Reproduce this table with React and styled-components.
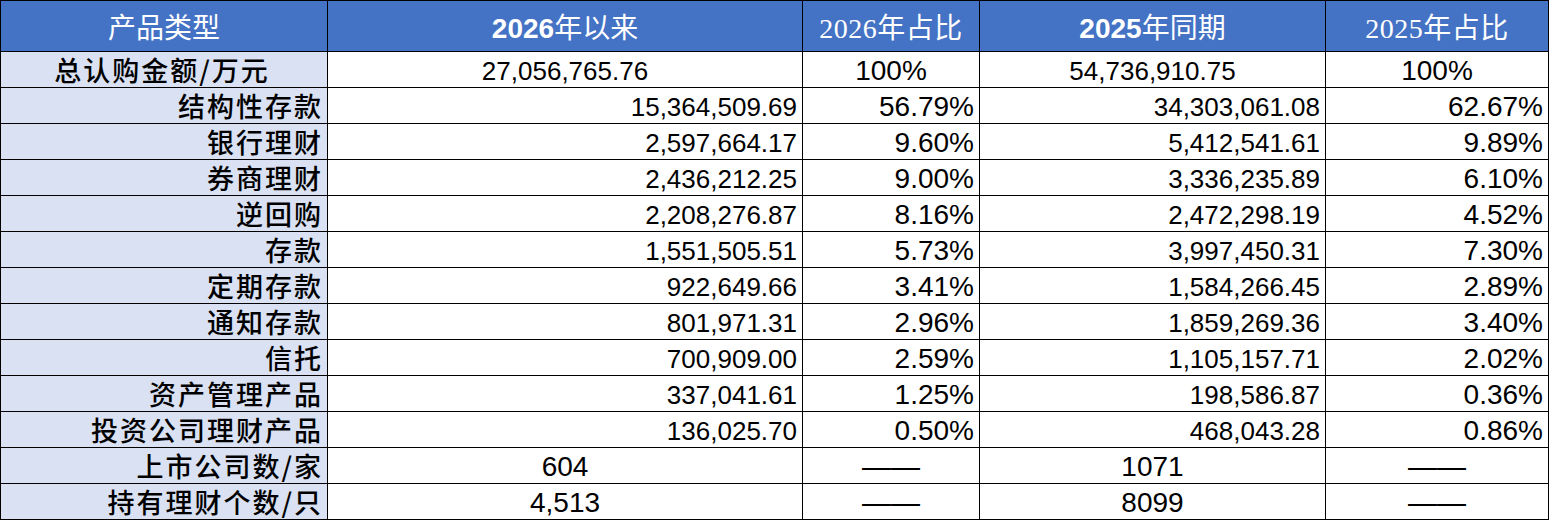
import React from 'react'
import styled, { createGlobalStyle } from 'styled-components'

const GlobalStyle = createGlobalStyle`
    html, body {
        margin: 0;
        padding: 0;
        background: #ffffff;
    }
`

const Table = styled.table`
    width: 1548px;
    table-layout: fixed;
    border-collapse: collapse;
    font-family: "Liberation Sans", Arial, "Noto Sans CJK SC", sans-serif;
    color: #000;
`

const HeadRow = styled.tr`
    height: 51px;
    background: #4472c4;
`

const BodyRow = styled.tr`
    height: 36px;
`

const HeadCell = styled.th`
    border: 1px solid #000;
    padding: 0;
    color: #fff;
    font-weight: 400;
    font-size: 28px;
    text-align: center;
    vertical-align: middle;
    letter-spacing: ${props => props.serif ? '0.5px' : '0'};
    font-family: ${props => props.serif
        ? '"Liberation Serif", "Noto Sans CJK SC", serif'
        : '"Liberation Sans", "Noto Sans CJK SC", sans-serif'};
`

const Year = styled.b`
    font-weight: 700;
    font-family: "Liberation Sans", Arial, sans-serif;
`

const LabelCell = styled.td`
    border: 1px solid #000;
    background: #d9e1f2;
    padding: 0 4px 0 0;
    font-family: "Noto Sans CJK SC", sans-serif;
    font-weight: 500;
    font-size: 27px;
    letter-spacing: 2px;
    line-height: 1;
    text-align: ${props => props.center ? 'center' : 'right'};
    vertical-align: middle;
`

const NumCell = styled.td`
    border: 1px solid #000;
    padding: 3px 5px 0 5px;
    font-size: ${props => props.pct ? '28px' : '26px'};
    line-height: 1;
    text-align: ${props => props.center ? 'center' : 'right'};
    vertical-align: middle;
    white-space: nowrap;
`

const Dash = styled.span`
    font-family: "Liberation Sans", Arial, sans-serif;
    font-size: 29px;
    line-height: 1;
`

const rows = [
    ['结构性存款', '15,364,509.69', '56.79%', '34,303,061.08', '62.67%'],
    ['银行理财', '2,597,664.17', '9.60%', '5,412,541.61', '9.89%'],
    ['券商理财', '2,436,212.25', '9.00%', '3,336,235.89', '6.10%'],
    ['逆回购', '2,208,276.87', '8.16%', '2,472,298.19', '4.52%'],
    ['存款', '1,551,505.51', '5.73%', '3,997,450.31', '7.30%'],
    ['定期存款', '922,649.66', '3.41%', '1,584,266.45', '2.89%'],
    ['通知存款', '801,971.31', '2.96%', '1,859,269.36', '3.40%'],
    ['信托', '700,909.00', '2.59%', '1,105,157.71', '2.02%'],
    ['资产管理产品', '337,041.61', '1.25%', '198,586.87', '0.36%'],
    ['投资公司理财产品', '136,025.70', '0.50%', '468,043.28', '0.86%'],
]

const counts = [
    ['上市公司数/家', '604', '1071'],
    ['持有理财个数/只', '4,513', '8099'],
]

export default function App() {
    return (
        <React.Fragment>
            <GlobalStyle />
            <Table>
                <colgroup>
                    <col style={{ width: 327 }} />
                    <col style={{ width: 475 }} />
                    <col style={{ width: 177 }} />
                    <col style={{ width: 346 }} />
                    <col style={{ width: 223 }} />
                </colgroup>
                <thead>
                    <HeadRow>
                        <HeadCell>产品类型</HeadCell>
                        <HeadCell><Year>2026</Year>年以来</HeadCell>
                        <HeadCell serif>2026年占比</HeadCell>
                        <HeadCell><Year>2025</Year>年同期</HeadCell>
                        <HeadCell serif>2025年占比</HeadCell>
                    </HeadRow>
                </thead>
                <tbody>
                    <BodyRow>
                        <LabelCell center>总认购金额/万元</LabelCell>
                        <NumCell center>27,056,765.76</NumCell>
                        <NumCell center pct>100%</NumCell>
                        <NumCell center>54,736,910.75</NumCell>
                        <NumCell center pct>100%</NumCell>
                    </BodyRow>
                    {rows.map(r => (
                        <BodyRow key={r[0]}>
                            <LabelCell>{r[0]}</LabelCell>
                            <NumCell>{r[1]}</NumCell>
                            <NumCell pct>{r[2]}</NumCell>
                            <NumCell>{r[3]}</NumCell>
                            <NumCell pct>{r[4]}</NumCell>
                        </BodyRow>
                    ))}
                    {counts.map(r => (
                        <BodyRow key={r[0]}>
                            <LabelCell>{r[0]}</LabelCell>
                            <NumCell center pct>{r[1]}</NumCell>
                            <NumCell center><Dash>——</Dash></NumCell>
                            <NumCell center pct>{r[2]}</NumCell>
                            <NumCell center><Dash>——</Dash></NumCell>
                        </BodyRow>
                    ))}
                </tbody>
            </Table>
        </React.Fragment>
    )
}
